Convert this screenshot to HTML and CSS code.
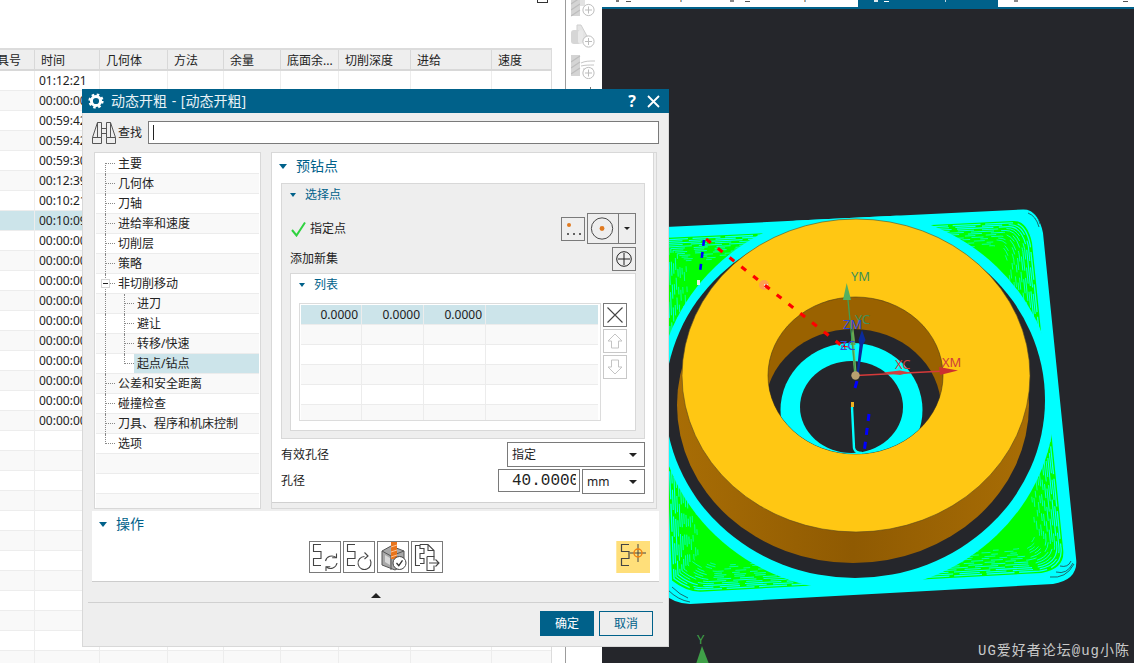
FILE: index.html
```html
<!DOCTYPE html>
<html lang="zh">
<head>
<meta charset="utf-8">
<title>动态开粗</title>
<link rel="stylesheet" href="styles.css">
</head>
<body>
<div class="app">
  <section class="left">
    <div class="topgap"><span class="stub"></span></div>
    <div class="table">
      <div class="thead">
        <span class="th th-first">刀具号</span><span class="th">时间</span><span class="th">几何体</span><span class="th">方法</span><span class="th">余量</span><span class="th">底面余...</span><span class="th">切削深度</span><span class="th">进给</span><span class="th">速度</span>
      </div>
      <div class="tbody">
        <div class="row">01:12:21</div>
        <div class="row">00:00:00</div>
        <div class="row">00:59:42</div>
        <div class="row">00:59:42</div>
        <div class="row">00:59:30</div>
        <div class="row">00:12:39</div>
        <div class="row">00:10:21</div>
        <div class="row row-sel">00:10:09</div>
        <div class="row">00:00:00</div>
        <div class="row">00:00:00</div>
        <div class="row">00:00:00</div>
        <div class="row">00:00:00</div>
        <div class="row">00:00:00</div>
        <div class="row">00:00:00</div>
        <div class="row">00:00:00</div>
        <div class="row">00:00:00</div>
        <div class="row">00:00:00</div>
        <div class="row">00:00:00</div>
        <div class="row"></div><div class="row"></div><div class="row"></div><div class="row"></div>
        <div class="row"></div><div class="row"></div><div class="row"></div><div class="row"></div>
        <div class="row"></div><div class="row"></div><div class="row"></div><div class="row"></div>
      </div>
    </div>
  </section>

  <aside class="tools">
    <svg class="tool tool-cut" width="24" height="17" viewBox="0 8 24 17">
      <rect x="0" y="0" width="9" height="24" fill="#d4d4d4"/>
      <path d="M0 12l9-6M0 18l9-6M0 24l9-6" stroke="#bdbdbd" stroke-width="1.2"/>
      <rect x="9" y="0" width="5" height="14" fill="#e2e2e2"/>
      <circle cx="17.5" cy="18" r="5.6" fill="#fff" stroke="#bdbdbd"/>
      <path d="M17.5 14.5v7M14 18h7" stroke="#bdbdbd"/>
    </svg>
    <svg class="tool" width="24" height="24" viewBox="0 0 24 24">
      <path d="M6 1h4l6 11-5 5H6z" fill="#e4e4e4" stroke="#cfcfcf"/>
      <rect x="0" y="6" width="11" height="14" rx="3" fill="#d6d6d6"/>
      <rect x="7" y="6" width="5" height="14" rx="2.4" fill="#e9e9e9"/>
      <circle cx="17.5" cy="17.5" r="5.6" fill="#fff" stroke="#bdbdbd"/>
      <path d="M17.5 14v7M14 17.500h7" stroke="#bdbdbd"/>
    </svg>
    <svg class="tool" width="24" height="24" viewBox="0 0 24 24">
      <rect x="0" y="0" width="9" height="21" fill="#d4d4d4"/>
      <path d="M0 7l9-6M0 13l9-6M0 19l9-6" stroke="#bdbdbd" stroke-width="1.2"/>
      <path d="M10 8c4-2 8-2 14-2M10 11c4-1 8-1 13-1M12 14h10" stroke="#c6c6c6" fill="none"/>
      <circle cx="17.500" cy="18" r="5.600" fill="#fff" stroke="#bdbdbd"/>
      <path d="M17.500 14.500v7M14 18h7" stroke="#bdbdbd"/>
    </svg>
    <span class="tool-tick"></span>
  </aside>

  <main class="view">
    <div class="tabs">
      <div class="tab tab-a">
        <svg width="172" height="7" viewBox="0 0 172 7"><rect x="14" y="0" width="3" height="2" fill="#777"/><rect x="24" y="1" width="5" height="1" fill="#555"/><rect x="78" y="0" width="1" height="2" fill="#d9a070"/><rect x="79" y="0" width="1" height="2" fill="#7ab0d9"/><rect x="128" y="0" width="4" height="2" fill="#888"/><rect x="143" y="1" width="5" height="1" fill="#555"/></svg>
      </div>
      <div class="tab tab-b">
        <svg width="84" height="7" viewBox="0 0 84 7"><rect x="30" y="0" width="1" height="2" fill="#d9a070"/><rect x="31" y="0" width="1" height="2" fill="#7ab0d9"/></svg>
      </div>
      <div class="tab tab-on">
        <svg width="140" height="7" viewBox="0 0 140 7"><rect x="16" y="0" width="4" height="2" fill="#dfe9ee"/><rect x="26" y="1" width="5" height="1" fill="#fff"/><rect x="87" y="0" width="1" height="2" fill="#bcd6e2"/></svg>
      </div>
      <div class="tab tab-c">
        <svg width="136" height="7" viewBox="0 0 136 7"><rect x="16" y="0" width="4" height="2" fill="#888"/><rect x="125" y="1" width="5" height="1" fill="#555"/></svg>
      </div>
    </div>
    <svg class="scene" width="532" height="654" viewBox="602 9 532 654">
      <defs>
        <path id="quad" d="M645 228L1023 209.500Q1038 209 1043 233L1076 558Q1079 580 1053 584L690 604Q675 604 660 592Z"/>
        <clipPath id="quadclip"><use href="#quad"/></clipPath>
        <clipPath id="holeclip"><ellipse cx="855.500" cy="375.500" rx="87.500" ry="78.500"/></clipPath>
        <linearGradient id="wall" x1="0" x2="1" y1="0" y2="0">
          <stop offset="0" stop-color="#a86d05"/><stop offset=".5" stop-color="#8f5a02"/><stop offset="1" stop-color="#a86d05"/>
        </linearGradient>
      </defs>
      <use href="#quad" fill="#00ffff"/>
      <g clip-path="url(#quadclip)">
        <use href="#quad" fill="#00ff00" transform="translate(860 400) scale(.94) translate(-860 -400)"/>
        <g fill="none" stroke="#00ffff">
          <use href="#quad" stroke-width="1.400" stroke-dasharray="30 5" transform="translate(860 400) scale(.93) translate(-860 -400)"/>
          <use href="#quad" stroke-width="1.200" stroke-dasharray="22 7" transform="translate(860 400) scale(.92) translate(-860 -400)"/>
          <use href="#quad" stroke-width="1.200" stroke-dasharray="40 6" transform="translate(860 400) scale(.91) translate(-860 -400)"/>
          <use href="#quad" stroke-width="1" stroke-dasharray="18 9" transform="translate(860 400) scale(.90) translate(-860 -400)"/>
          <use href="#quad" stroke-width="1" stroke-dasharray="26 8" transform="translate(860 400) scale(.89) translate(-860 -400)"/>
          <use href="#quad" stroke-width="1" stroke-dasharray="16 10" transform="translate(860 400) scale(.88) translate(-860 -400)"/>
          <use href="#quad" stroke-width=".9" stroke-dasharray="12 12" transform="translate(860 400) scale(.87) translate(-860 -400)"/>
          <use href="#quad" stroke-width=".9" stroke-dasharray="14 9" transform="translate(860 400) scale(.86) translate(-860 -400)"/>
          <use href="#quad" stroke-width=".9" stroke-dasharray="9 12" transform="translate(860 400) scale(.85) translate(-860 -400)"/>
          <use href="#quad" stroke-width=".8" stroke-dasharray="13 14" transform="translate(860 400) scale(.84) translate(-860 -400)"/>
          <use href="#quad" stroke-width=".8" stroke-dasharray="8 15" transform="translate(860 400) scale(.83) translate(-860 -400)"/>
          <use href="#quad" stroke-width=".8" stroke-dasharray="11 17" transform="translate(860 400) scale(.82) translate(-860 -400)"/>
          <use href="#quad" stroke-width=".8" stroke-dasharray="7 18" transform="translate(860 400) scale(.81) translate(-860 -400)"/>
        </g>
        <path d="M1060 566q8 2 11-5M1056 572q11 3 17-9M1050 577q16 2 24-13M1028 213q8 3 11 14M1032 212q6 3 8 12M672 587q8 8 16 11M668 590q10 10 22 12" fill="none" stroke="#25262b" stroke-width=".7"/>
        <ellipse cx="856" cy="401" rx="199" ry="190" fill="#00ffff"/>
        <ellipse cx="855" cy="400" rx="190" ry="178" fill="#25262b"/>
      </g>

      <ellipse cx="853" cy="405" rx="176" ry="158" fill="url(#wall)"/>
      <ellipse cx="856" cy="375.500" rx="174" ry="156.500" fill="#ffc713" stroke="#5a4a20" stroke-width=".6"/>

      <ellipse cx="855.500" cy="375.500" rx="87.500" ry="78.500" fill="#9a6200" stroke="#4a3a18" stroke-width=".6"/>
      <g clip-path="url(#holeclip)">
        <ellipse cx="853" cy="408" rx="88" ry="79" fill="#25262b"/>
        <ellipse cx="851.500" cy="410" rx="71" ry="67" fill="#00ffff"/>
        <ellipse cx="851.500" cy="407" rx="51.500" ry="46" fill="#25262b"/>
        <path d="M852 407L854 448Q855 453 862 453" fill="none" stroke="#00ffff" stroke-width="2.400"/>
      </g>
      <rect x="851" y="402" width="3" height="5" fill="#f0b020"/>

      <circle cx="764" cy="285" r="5" fill="#ffa050"/>
      <rect x="764" y="284" width="4" height="4" fill="#f0e0d0"/>
      <path d="M706 239L842 346" stroke="#ff0000" stroke-width="3.200" stroke-dasharray="6 9"/>
      <path d="M841 346l8 1M844 342l1 8" stroke="#ff0000" stroke-width="1"/>
      <path d="M704 240L700 272" stroke="#0000ff" stroke-width="2.600" stroke-dasharray="6 6"/>
      <rect x="697" y="280" width="3" height="5" fill="#e8f0e0"/>
      <path d="M857 381L855 388" stroke="#0000ff" stroke-width="3"/>
      <path d="M869 414L864 453" stroke="#0000ff" stroke-width="3" stroke-dasharray="7 7"/>

      <path d="M855.500 375.500L853 345" stroke="#7dbb60" stroke-width="2.500"/>
      <polygon points="853,325 850.500,345 855.500,345" fill="#6aa850"/>
      <path d="M855.500 375.500L847 290" stroke="#3f9f55" stroke-width="1.300"/>
      <polygon points="846.700,283 843,300 851,300" fill="#55b060"/>
      <polygon points="862,330 858.500,340 859.500,345 856.500,375 858.500,375 863,345 865.500,340" fill="#0a2a9a"/>
      <path d="M856 375.500L945 371" stroke="#d63a3a" stroke-width="1.600"/>
      <polygon points="883,372.500 900,370.500 910,372.500 900,375" fill="#d04040"/>
      <polygon points="958,370.500 939,367 940,375" fill="#cc3030"/>
      <circle cx="855.500" cy="375.500" r="4.200" fill="#b8a070"/>

      <text class="lbl lbl-g" x="851" y="281">YM</text>
      <text class="lbl lbl-g" x="855" y="324">YC</text>
      <text class="lbl lbl-b" x="843" y="329">ZM</text>
      <text class="lbl lbl-b" x="840" y="350">ZC</text>
      <text class="lbl lbl-r" x="895" y="369">XC</text>
      <text class="lbl lbl-r" x="942" y="367">XM</text>

      <text class="triad" x="697" y="644">Y</text>
      <polygon points="702,646 696,664 709,664" fill="#3fa048"/>
      <text class="mark" x="978" y="655">UG爱好者论坛@ug小陈</text>
    </svg>
  </main>
</div>

<div class="dlg">
  <header class="dlg-title">
    <svg class="gear" width="16" height="16" viewBox="0 0 16 16">
      <circle cx="8" cy="8" r="4.600" fill="none" stroke="#fff" stroke-width="3"/>
      <circle cx="8" cy="8" r="6.400" fill="none" stroke="#fff" stroke-width="2.400" stroke-dasharray="2.500 2.520"/>
    </svg>
    <span class="dlg-name">动态开粗 - [动态开粗]</span>
    <span class="dlg-help">?</span>
    <svg class="dlg-x" width="13" height="13" viewBox="0 0 13 13"><path d="M1 1l11 11M12 1L1 12" stroke="#fff" stroke-width="1.800"/></svg>
  </header>

  <div class="find">
    <svg width="24" height="22" viewBox="0 0 24 22" fill="none" stroke="#555">
      <path d="M5.500.5h4v15h-9zM.5 15.500v6h9v-6M5.500.5v15"/>
      <path d="M18.500.5h-4v15h9zM23.500 15.500v6h-9v-6M18.500.5v15"/>
      <path d="M9.500 6.500h5M9.500 11.500h5"/>
    </svg>
    <span class="find-lbl">查找</span>
    <div class="find-input"><span class="caret"></span></div>
  </div>

  <div class="dlg-body">
    <nav class="tree">
      <div class="tr first">主要</div>
      <div class="tr">几何体</div>
      <div class="tr">刀轴</div>
      <div class="tr">进给率和速度</div>
      <div class="tr">切削层</div>
      <div class="tr">策略</div>
      <div class="tr tr-open"><span class="minus"></span>非切削移动</div>
      <div class="tr tr2"><span class="l2">进刀</span></div>
      <div class="tr tr2"><span class="l2">避让</span></div>
      <div class="tr tr2"><span class="l2">转移/快速</span></div>
      <div class="tr tr2 tr2-end"><span class="l2 l2-sel">起点/钻点</span></div>
      <div class="tr">公差和安全距离</div>
      <div class="tr">碰撞检查</div>
      <div class="tr">刀具、程序和机床控制</div>
      <div class="tr end">选项</div>
      <div class="tr blank"></div>
      <div class="tr blank"></div>
      <div class="tr blank"></div>
    </nav>

    <div class="page">
      <div class="page-in">
        <div class="head head-main"><i class="tri"></i><span>预钻点</span></div>
        <div class="sub">
          <div class="head head-sub"><i class="tri tri-s"></i><span>选择点</span></div>
          <div class="pick">
            <svg class="check" width="15" height="16" viewBox="0 0 15 16"><path d="M1 9l4.500 5.500L14 1.500" fill="none" stroke="#2fd23f" stroke-width="2"/></svg>
            <span class="pick-lbl">指定点</span>
            <span class="btn btn-dots">
              <svg width="22" height="22" viewBox="0 0 22 22"><circle cx="7" cy="7" r="2" fill="#e07a20"/><circle cx="6" cy="16" r="1" fill="#333"/><circle cx="12" cy="16" r="1" fill="#333"/><circle cx="18" cy="16" r="1" fill="#333"/></svg>
            </span>
            <span class="btn btn-split">
              <svg width="31" height="29" viewBox="0 0 31 29"><circle cx="14.500" cy="14.500" r="11" fill="none" stroke="#444"/><circle cx="14.500" cy="14.500" r="2.500" fill="#e07a20"/></svg>
              <span class="btn-caret"><i class="dn dn-s"></i></span>
            </span>
          </div>
          <div class="addset">
            <span>添加新集</span>
            <span class="btn btn-add">
              <svg width="22" height="22" viewBox="0 0 22 22" fill="none" stroke="#222"><circle cx="11" cy="11" r="7.300"/><path d="M11 5v12M5 11h12"/></svg>
            </span>
          </div>
          <div class="list">
            <div class="head head-list"><i class="tri tri-s"></i><span>列表</span></div>
            <div class="list-main">
              <div class="grid">
                <div class="g-row g-sel"><span>0.0000</span><span>0.0000</span><span>0.0000</span><span></span></div>
                <div class="g-row g-alt"><span></span><span></span><span></span><span></span></div>
                <div class="g-row"><span></span><span></span><span></span><span></span></div>
                <div class="g-row g-alt"><span></span><span></span><span></span><span></span></div>
                <div class="g-row"><span></span><span></span><span></span><span></span></div>
                <div class="g-row g-alt g-last"><span></span><span></span><span></span><span></span></div>
              </div>
              <div class="side">
                <span class="btn sbtn">
                  <svg width="22" height="22" viewBox="0 0 22 22"><path d="M3.500 3.500l15 15M18.500 3.500l-15 15" stroke="#444" stroke-width="1.100"/></svg>
                </span>
                <span class="btn sbtn sbtn-off">
                  <svg width="22" height="22" viewBox="0 0 22 22"><path d="M11 4l7 7h-3.500v7h-7v-7H4z" fill="none" stroke="#c4c4c4"/></svg>
                </span>
                <span class="btn sbtn sbtn-off">
                  <svg width="22" height="22" viewBox="0 0 22 22"><path d="M11 18l7-7h-3.500V4h-7v7H4z" fill="none" stroke="#c4c4c4"/></svg>
                </span>
              </div>
            </div>
          </div>
        </div>
        <div class="field f-a">
          <span class="f-lbl">有效孔径</span>
          <div class="sel sel-wide"><span>指定</span><i class="dn"></i></div>
        </div>
        <div class="field f-b">
          <span class="f-lbl">孔径</span>
          <div class="num"><span class="num-in">40.00000</span></div>
          <div class="sel sel-unit"><span>mm</span><i class="dn"></i></div>
        </div>
      </div>
    </div>
  </div>

  <section class="ops">
    <div class="head head-ops"><i class="tri"></i><span>操作</span></div>
    <div class="ops-row">
      <span></span>
      <div class="ops-btns">
        <span class="btn obtn">
          <svg width="30" height="30" viewBox="0 0 30 30" fill="none" stroke="#444" stroke-width="1.100">
            <path d="M11 2.500H3.500v7H11v7H3.500v7H11"/>
            <path d="M15.500 19a6.500 6.500 0 0 1 10.500-3.500M27 21a6.500 6.500 0 0 1-10.500 4"/>
            <path d="M26.500 11.500v4.300h-4.300M16 29v-4.300h4.300"/>
          </svg>
        </span>
        <span class="btn obtn">
          <svg width="30" height="30" viewBox="0 0 30 30" fill="none" stroke="#444" stroke-width="1.100">
            <path d="M11 2.500H3.500v7H11v7H3.500v7H11"/>
            <path d="M26 17.500a6.500 6.500 0 1 1-5.500-3"/>
            <path d="M20.500 10.500l3.500 3.500-3.500 3"/>
          </svg>
        </span>
        <span class="btn obtn">
          <svg width="30" height="30" viewBox="0 0 30 30">
            <path d="M4 9l9-5 13 5v14l-9 5-13-5z" fill="#a8a8a8" stroke="#555"/>
            <path d="M4 9l9 5v14M13 14l13-5" fill="none" stroke="#555"/>
            <path d="M7 13l5 3v7l-5-3z" fill="#d8d8d8"/>
            <rect x="13" y="0" width="6" height="17" fill="#e8741c"/>
            <path d="M13 5l6-2M13 10l6-2M13 15l6-2" stroke="#ffc090"/>
            <circle cx="21.500" cy="21" r="6.500" fill="#fff" stroke="#444"/>
            <path d="M18.500 21l2.300 2.700 3.700-5.400" fill="none" stroke="#333" stroke-width="1.300"/>
          </svg>
        </span>
        <span class="btn obtn">
          <svg width="30" height="30" viewBox="0 0 30 30" fill="none" stroke="#444" stroke-width="1.100">
            <path d="M8 3.500H3.500v20H8"/>
            <path d="M8 2.500h8l6 6v6M16 2.500v6h6"/>
            <path d="M8 2.500v4h4v5H8v5h4v5H8"/>
            <path d="M15 14.500v14h7v-5M15 14.500h7v4M17 21h10M23.500 17.500L27 21l-3.500 3.500"/>
          </svg>
        </span>
      </div>
      <span class="btn-hi">
        <svg width="33" height="32" viewBox="0 0 33 32" fill="none">
          <path d="M12 3.500H4.500v7H12v7H4.500v7H12" stroke="#444" stroke-width="1.200"/>
          <path d="M21 3v18M13 12h16" stroke="#444"/>
          <circle cx="21" cy="12" r="4" stroke="#f08010" stroke-width="1.400"/>
        </svg>
      </span>
    </div>
  </section>

  <div class="fold"><i class="up"></i></div>
  <footer class="foot">
    <span class="act act-ok">确定</span>
    <span class="act">取消</span>
  </footer>
</div>
</body>
</html>
```

FILE: styles.css
```css
* { box-sizing: border-box; }
html, body { margin: 0; padding: 0; }
body {
  width: 1134px;
  height: 663px;
  overflow: hidden;
  background: #fff;
  color: #222;
  font: 12px/16px "Noto Sans", "Noto Sans CJK SC", sans-serif;
}
i { display: block; }

.app { display: flex; width: 1134px; height: 663px; }

/* left operation table */
.left { width: 566px; height: 663px; border-right: 1px solid #9c9c9c; overflow: hidden; }
.topgap { height: 48px; display: flex; justify-content: flex-end; padding-right: 17px; }
.stub { width: 11px; height: 3px; border: 1px solid #333; border-top: 0; }
.table { width: 552px; border-top: 2px solid #dcdcdc; border-right: 1px solid #dcdcdc; }
.thead {
  display: grid;
  grid-template-columns: 35px 65px 68px 56px 57px 58px 72px 81px 58px;
  height: 21px;
  background: #eee;
  border-bottom: 2px solid #d8d8d8;
}
.th { padding-left: 6px; line-height: 21px; border-right: 1px solid #d8d8d8; white-space: nowrap; overflow: hidden; }
.th:last-child { border-right: 0; }
.th-first { display: flex; justify-content: flex-end; padding: 0 13px 0 0; }
.row {
  height: 20px;
  line-height: 19px;
  padding-left: 39px;
  border-bottom: 1px solid #ededed;
  white-space: nowrap;
  background-color: #fff;
  background-image:
    linear-gradient(#ededed, #ededed), linear-gradient(#ededed, #ededed),
    linear-gradient(#ededed, #ededed), linear-gradient(#ededed, #ededed),
    linear-gradient(#ededed, #ededed), linear-gradient(#ededed, #ededed),
    linear-gradient(#ededed, #ededed), linear-gradient(#ededed, #ededed);
  background-size: 1px 100%;
  background-repeat: no-repeat;
  background-position: 34px 0, 99px 0, 167px 0, 223px 0, 280px 0, 338px 0, 410px 0, 491px 0;
}
.row:nth-child(even) { background-color: #f9f9f9; }
.row-sel, .row-sel:nth-child(even) { background-color: #cce4ea; }

/* right tool strip */
.tools { width: 36px; display: flex; flex-direction: column; align-items: flex-start; padding-left: 5px; }
.tool { display: block; margin-bottom: 7px; flex: none; }
.tool-tick { width: 1px; height: 2px; margin: 1px 0 0 19px; background: #777; }

/* 3D view */
.view { width: 532px; height: 663px; background: #25262b; overflow: hidden; display: flex; flex-direction: column; }
.tabs { display: flex; height: 9px; flex: none; border-bottom: 2px solid #00618a; background: #fff; }
.tab { height: 7px; overflow: hidden; }
.tab svg { display: block; }
.tab-a { width: 172px; }
.tab-b { width: 84px; }
.tab-on { width: 140px; background: #00618a; }
.tab-c { width: 136px; }
.scene { display: block; flex: none; }
.lbl { font: 13px "Noto Sans", sans-serif; }
.lbl-g { fill: #3f8f58; }
.lbl-b { fill: #2c48e0; }
.lbl-r { fill: #cf3d3d; }
.triad { font: 13px "Noto Sans", sans-serif; fill: #3fa048; }
.mark { font: 14px "Liberation Mono", "Noto Sans CJK SC", monospace; letter-spacing: 1px; fill: #c9c9c9; }

/* dialog */
.dlg {
  position: absolute;
  left: 82px;
  top: 89px;
  width: 587px;
  height: 558px;
  background: #eee;
  border: 1px solid #d8d8d8;
  border-top: 0;
  display: flex;
  flex-direction: column;
}
.dlg-title {
  display: flex;
  align-items: center;
  height: 24px;
  margin: 0 -1px;
  padding: 0 9px 0 6px;
  background: #00618a;
  color: #e8f2f6;
  flex: none;
}
.gear { display: block; flex: none; }
.dlg-name { margin-left: 7px; font-size: 14px; word-spacing: 1px; flex: 1; white-space: nowrap; }
.dlg-help { font-size: 16px; font-weight: 700; color: #fff; margin-right: 11px; }
.dlg-x { display: block; }

.find { display: flex; align-items: center; height: 23px; margin: 8px 9px 8px 9px; flex: none; }
.find-lbl { margin-left: 2px; }
.find-input { flex: 1; margin-left: 6px; height: 23px; background: #fff; border: 1px solid #7a7a7a; padding: 3px 4px; }
.caret { display: block; width: 1px; height: 15px; background: #222; }

.dlg-body { display: flex; gap: 10px; height: 357px; margin: 0 11px; flex: none; }
.tree { width: 167px; height: 357px; background: #fff; border: 1px solid #d8d8d8; padding: 1px; overflow: hidden; flex: none; }
.tr {
  position: relative;
  display: flex;
  align-items: center;
  height: 20px;
  padding-left: 22px;
  border-bottom: 1px solid #ececec;
  white-space: nowrap;
}
.tr:nth-child(even) { background: #f9f9f9; }
.tr::before {
  content: "";
  position: absolute;
  left: 9px;
  top: 0;
  bottom: -1px;
  border-left: 1px dotted #888;
}
.tr::after {
  content: "";
  position: absolute;
  left: 10px;
  top: 9px;
  width: 9px;
  border-top: 1px dotted #888;
}
.tr.first::before { top: 9px; }
.tr.end::before { bottom: 9px; }
.tr.blank::before, .tr.blank::after { display: none; }
.tr2 { padding-left: 38px; }
.tr2::after { left: 29px; }
.l2 { display: flex; align-items: center; flex: 1; height: 19px; padding-left: 3px; }
.l2::before {
  content: "";
  position: absolute;
  left: 28px;
  top: 0;
  bottom: -1px;
  border-left: 1px dotted #888;
}
.tr2-end .l2::before { bottom: 9px; }
.l2-sel { background: #cce4ea; }
.minus {
  position: absolute;
  left: 5px;
  top: 5px;
  width: 9px;
  height: 9px;
  background: #fff;
  border: 1px solid #d4d4d4;
  z-index: 1;
}
.minus::after { content: ""; display: block; width: 5px; height: 1px; margin: 3px 1px; background: #222; }

.page { width: 386px; height: 357px; border: 1px solid #d8d8d8; padding-right: 2px; flex: none; }
.page-in { background: #fff; height: 350px; border-right: 1px solid #d8d8d8; border-bottom: 1px solid #d0d0d0; padding: 0 8px 0 9px; }

.head { display: flex; align-items: center; color: #00618a; }
.tri { width: 0; height: 0; border-style: solid; border-width: 5px 4.5px 0; border-color: #00618a transparent transparent; flex: none; }
.tri-s { border-width: 4px 3.500px 0; }
.head-main { height: 26px; margin: 0 0 4px -2px; font-size: 14px; }
.head-main span { margin-left: 9px; }
.sub { height: 256px; background: #eee; border: 1px solid #d8d8d8; padding: 0 8px; }
.head-sub { height: 21px; }
.head-sub span { margin-left: 9px; }
.pick { display: flex; align-items: center; height: 31px; margin-top: 8px; }
.check { display: block; margin-left: 1px; }
.pick-lbl { margin-left: 4px; flex: 1; }
.btn { display: flex; align-items: center; justify-content: center; border: 1px solid #7a7a7a; flex: none; }
.btn-dots { width: 24px; height: 24px; margin-right: 2px; }
.btn-split { width: 49px; height: 31px; }
.btn-caret { width: 17px; height: 29px; border-left: 1px solid #7a7a7a; display: flex; align-items: center; justify-content: center; flex: none; }
.addset { display: flex; align-items: center; justify-content: space-between; height: 24px; margin-top: 3px; }
.btn-add { width: 24px; height: 24px; }
.list { height: 158px; margin-top: 2px; background: #fff; border: 1px solid #d8d8d8; padding: 0 8px; }
.head-list { height: 22px; }
.head-list span { margin-left: 9px; }
.list-main { display: flex; gap: 2px; margin-top: 7px; }
.grid { width: 302px; height: 118px; border: 1px solid #dcdcdc; padding: 1px 2px 0 1px; overflow: hidden; }
.g-row { display: grid; grid-template-columns: 61px 62px 62px 112px; width: 297px; height: 20px; border-bottom: 1px solid #ececec; }
.g-row span { border-right: 1px solid #ececec; text-align: right; padding-right: 3px; line-height: 19px; }
.g-row span:last-child { border-right: 0; }
.g-alt { background: #f9f9f9; }
.g-sel { background: #cce4ea; }
.g-last { height: 15px; border-bottom: 0; }
.side { display: flex; flex-direction: column; gap: 2px; }
.sbtn { width: 24px; height: 24px; }
.sbtn-off { border-color: #c8c8c8; }

.field { display: flex; align-items: flex-start; }
.f-a { margin-top: 3px; height: 27px; }
.f-b { height: 25px; }
.f-lbl { flex: 1; line-height: 25px; }
.f-b .f-lbl { line-height: 24px; }
.sel { display: flex; align-items: center; justify-content: space-between; background: #fff; border: 1px solid #7a7a7a; padding: 0 7px 0 4px; }
.sel-wide { width: 138px; height: 25px; }
.sel-wide span { padding-top: 1px; }
.sel-unit { width: 63px; height: 25px; margin-left: 2px; }
.num {
  width: 82px;
  height: 23px;
  border: 1px solid #7a7a7a;
  background: #fff;
  padding-left: 13px;
}
.num-in {
  display: block;
  width: 64px;
  overflow: hidden;
  white-space: nowrap;
  font: 16px/22px "Liberation Mono", monospace;
}
.dn { width: 0; height: 0; border-style: solid; border-width: 4px 4px 0; border-color: #222 transparent transparent; flex: none; }
.dn-s { border-width: 3px 3px 0; }

.ops { height: 71px; margin: 2px 9px 0; background: #fff; border-bottom: 1px solid #ccc; flex: none; }
.head-ops { height: 26px; padding-left: 7px; font-size: 14px; }
.head-ops span { margin-left: 9px; }
.ops-row { display: grid; grid-template-columns: 1fr auto 1fr; margin-top: 4px; }
.ops-btns { display: flex; gap: 2px; }
.obtn { width: 32px; height: 32px; }
.btn-hi {
  justify-self: end;
  width: 34px;
  height: 32px;
  margin-right: 9px;
  background: #ffdf7a;
  border-left: 1px solid #ffe9a0;
  display: flex;
  align-items: center;
  justify-content: center;
}
.fold { display: flex; align-items: center; justify-content: center; height: 21px; margin: 0 5px; border-bottom: 1px solid #d0d0d0; flex: none; }
.up { width: 0; height: 0; border-style: solid; border-width: 0 5px 5px; border-color: transparent transparent #222; margin-top: 6px; }
.foot { display: flex; justify-content: flex-end; gap: 5px; padding: 8px 15px 0 0; }
.act { width: 54px; height: 25px; line-height: 23px; text-align: center; border: 1px solid #00618a; color: #00618a; }
.act-ok { background: #00618a; color: #fff; }
```
